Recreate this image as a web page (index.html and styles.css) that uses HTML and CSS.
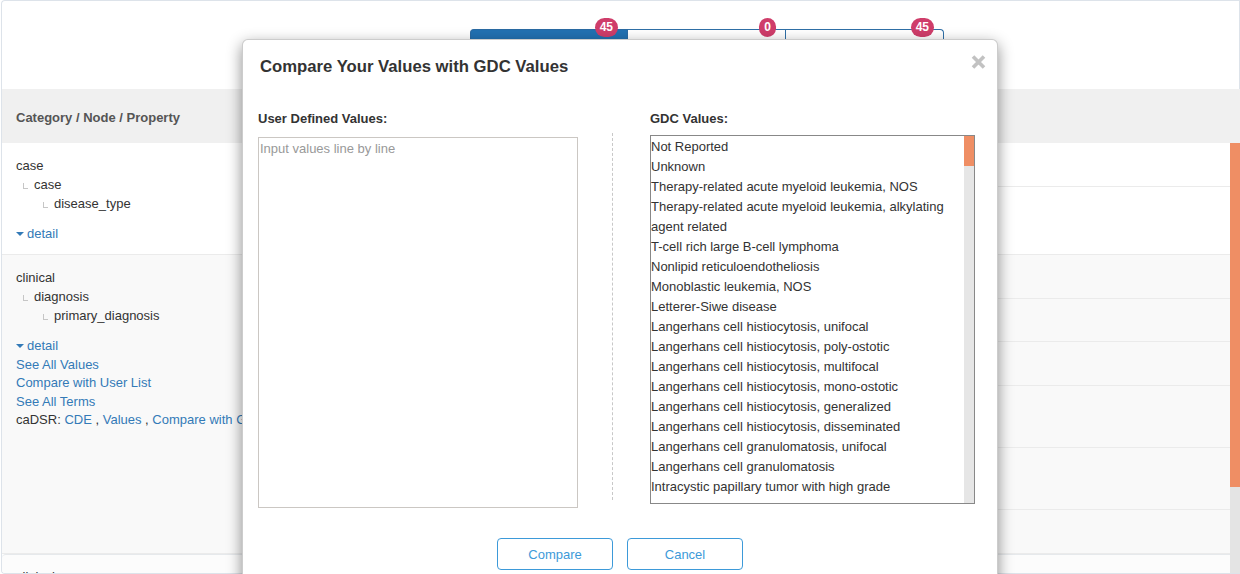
FILE: index.html
```html
<!DOCTYPE html>
<html>
<head>
<meta charset="utf-8">
<link rel="stylesheet" href="styles.css">
</head>
<body>
<div class="panel">
  <div class="topbar">
    <div class="tabs">
      <div class="tab active"><span class="badge">45</span></div>
      <div class="tab"><span class="badge">0</span></div>
      <div class="tab"><span class="badge">45</span></div>
    </div>
  </div>
  <div class="thead">Category / Node / Property</div>
  <div class="tbody">
    <div class="rows">
      <div class="row row-white">
        <div class="cell-prop">
          <div class="tree">case</div>
          <div class="tree lvl1"><span class="elbow"></span>case</div>
          <div class="tree lvl2"><span class="elbow"></span>disease_type</div>
          <div class="links">
            <a class="link"><span class="caret"></span>detail</a>
          </div>
        </div>
        <div class="cell-vals">
          <div class="sub h44"></div>
          <div class="sub h67 last"></div>
        </div>
      </div>
      <div class="row row-gray">
        <div class="cell-prop">
          <div class="tree">clinical</div>
          <div class="tree lvl1"><span class="elbow"></span>diagnosis</div>
          <div class="tree lvl2"><span class="elbow"></span>primary_diagnosis</div>
          <div class="links">
            <a class="link"><span class="caret"></span>detail</a>
            <a class="link">See All Values</a>
            <a class="link">Compare with User List</a>
            <a class="link">See All Terms</a>
            <div class="cadsr">caDSR: <a class="link-inline">CDE</a> , <a class="link-inline">Values</a> , <a class="link-inline">Compare with GDC</a></div>
          </div>
        </div>
        <div class="cell-vals">
          <div class="sub h44"></div>
          <div class="sub h43"></div>
          <div class="sub h44"></div>
          <div class="sub h62"></div>
          <div class="sub h62"></div>
          <div class="sub h43 last"></div>
        </div>
      </div>
      <div class="row row-light">
        <div class="cell-prop">
          <div class="tree">clinical</div>
        </div>
      </div>
    </div>
    <div class="vscroll"><div class="vthumb"></div></div>
  </div>
</div>

<div class="modal">
  <div class="modal-header">
    <h4 class="modal-title">Compare Your Values with GDC Values</h4>
    <span class="close"><svg width="15" height="14" viewBox="0 0 15 14"><path d="M2 1.5 L13 12.5 M13 1.5 L2 12.5" stroke="#c2c2c2" stroke-width="3.6" fill="none"/></svg></span>
  </div>
  <div class="modal-body">
    <div class="cols">
      <div class="col-left">
        <div class="label label-left">User Defined Values:</div>
        <textarea class="user-input" placeholder="Input values line by line"></textarea>
      </div>
      <div class="divider"></div>
      <div class="col-right">
        <div class="label label-right">GDC Values:</div>
        <div class="listbox">
          <div class="list">
            <div class="item">Not Reported</div>
            <div class="item">Unknown</div>
            <div class="item">Therapy-related acute myeloid leukemia, NOS</div>
            <div class="item">Therapy-related acute myeloid leukemia, alkylating agent related</div>
            <div class="item">T-cell rich large B-cell lymphoma</div>
            <div class="item">Nonlipid reticuloendotheliosis</div>
            <div class="item">Monoblastic leukemia, NOS</div>
            <div class="item">Letterer-Siwe disease</div>
            <div class="item">Langerhans cell histiocytosis, unifocal</div>
            <div class="item">Langerhans cell histiocytosis, poly-ostotic</div>
            <div class="item">Langerhans cell histiocytosis, multifocal</div>
            <div class="item">Langerhans cell histiocytosis, mono-ostotic</div>
            <div class="item">Langerhans cell histiocytosis, generalized</div>
            <div class="item">Langerhans cell histiocytosis, disseminated</div>
            <div class="item">Langerhans cell granulomatosis, unifocal</div>
            <div class="item">Langerhans cell granulomatosis</div>
            <div class="item">Intracystic papillary tumor with high grade</div>
          </div>
          <div class="lscroll"><div class="lthumb"></div></div>
        </div>
      </div>
    </div>
    <div class="actions">
      <button class="btn">Compare</button>
      <button class="btn">Cancel</button>
    </div>
  </div>
</div>
</body>
</html>
```

FILE: styles.css
```css
html, body {
  margin: 0;
  padding: 0;
  background: #fff;
  font-family: "Liberation Sans", Arial, sans-serif;
  font-size: 13px;
  color: #333;
  overflow: hidden;
  height: 574px;
}

.panel {
  margin-left: 1px;
  width: 1239px;
  height: 574px;
  box-sizing: border-box;
  border: 1px solid #dde3ea;
  border-right: none;
  border-radius: 4px 0 0 4px;
  overflow: hidden;
  display: flex;
  flex-direction: column;
}

.topbar {
  height: 88px;
  flex: none;
  box-sizing: border-box;
  padding-top: 28px;
  padding-left: 468px;
  border-right: 1px solid #dde3ea;
}

.tabs {
  display: flex;
}

.tab {
  position: relative;
  width: 158px;
  height: 36px;
  box-sizing: border-box;
  border: 1px solid #2f6fa7;
  border-bottom: none;
  background: #fff;
}

.tab + .tab {
  border-left: none;
}

.tab.active {
  background: #2271b2;
  border-color: #2a6aa3;
  border-radius: 4px 0 0 0;
}

.tab:last-child {
  width: 158px;
  border-radius: 0 4px 0 0;
}

.badge {
  position: absolute;
  top: -12px;
  right: 9px;
  height: 19px;
  min-width: 17px;
  box-sizing: border-box;
  padding: 0 5px;
  border-radius: 10px;
  background: #cf3d6a;
  color: #fff;
  font-weight: bold;
  font-size: 12px;
  line-height: 19px;
  text-align: center;
}

.thead {
  height: 54px;
  flex: none;
  background: #f0f0f0;
  display: flex;
  align-items: center;
  padding-left: 14px;
  font-weight: bold;
  color: #555;
  padding-top: 2px;
  box-sizing: border-box;
}

.tbody {
  flex: 1;
  display: flex;
  min-height: 0;
}

.rows {
  flex: 1;
  min-width: 0;
}

.row {
  display: flex;
  border-bottom: 1px solid #ebebeb;
}

.row-white { background: #fff; }
.row-gray { background: #f9f9f9; }
.row-light { background: #fcfcfc; border-top: 1px solid #e6e9ec; border-radius: 4px 0 0 0; height: 60px; }

.cell-prop {
  width: 300px;
  flex: none;
  box-sizing: border-box;
  padding: 13px 14px 0;
}

.row-light .cell-prop {
  padding-top: 12px;
}

.cell-vals {
  flex: 1;
  display: flex;
  flex-direction: column;
}

.sub {
  box-sizing: border-box;
  border-bottom: 1px solid #ebebeb;
}

.sub.last { border-bottom: none; }

.h43 { height: 43px; }
.h44 { height: 44px; }
.h62 { height: 62px; }
.h67 { height: 67px; }

.tree {
  line-height: 19px;
  white-space: nowrap;
}

.lvl1 { padding-left: 7px; }
.lvl2 { padding-left: 27px; }

.elbow {
  display: inline-block;
  width: 5px;
  height: 6px;
  box-sizing: border-box;
  border-left: 1px solid #c6c6c6;
  border-bottom: 1px solid #c6c6c6;
  margin-right: 6px;
  vertical-align: baseline;
}

.links {
  margin-top: 12px;
}

.link {
  display: block;
  color: #337ab7;
  line-height: 18.6px;
  text-decoration: none;
  white-space: nowrap;
}

.link-inline {
  color: #337ab7;
  text-decoration: none;
}

.cadsr {
  line-height: 18.6px;
  white-space: nowrap;
}

.caret {
  display: inline-block;
  width: 0;
  height: 0;
  border-top: 4px solid #337ab7;
  border-left: 4px solid transparent;
  border-right: 4px solid transparent;
  margin-right: 3px;
  vertical-align: 2px;
}

.vscroll {
  width: 10px;
  flex: none;
  background: #e4e4e4;
}

.vthumb {
  height: 344px;
  background: #ef8e64;
}

/* modal */
.modal {
  position: absolute;
  left: 242px;
  top: 39px;
  width: 756px;
  height: 560px;
  box-sizing: border-box;
  background: #fff;
  border: 1px solid rgba(0, 0, 0, 0.2);
  border-radius: 6px;
  box-shadow: 0 5px 15px rgba(0, 0, 0, 0.45);
}

.modal-header {
  position: relative;
  padding: 17px 17px 0;
}

.modal-title {
  margin: 0;
  font-size: 16.7px;
  line-height: 20px;
  font-weight: bold;
  color: #333;
}

.close {
  position: absolute;
  top: 15px;
  right: 11px;
  width: 15px;
  height: 14px;
  display: block;
}

.close svg { display: block; }

.modal-body {
  padding: 33px 15px 0;
}

.cols {
  display: flex;
  align-items: flex-start;
}

.col-left {
  width: 320px;
  flex: none;
}

.label {
  font-weight: bold;
  line-height: 18px;
  color: #333;
}

.label-left { margin-bottom: 9px; }
.label-right { margin-bottom: 7px; }

.user-input {
  display: block;
  width: 320px;
  height: 371px;
  box-sizing: border-box;
  margin: 0;
  border: 1px solid #cbc7c3;
  padding: 2px 1px;
  resize: none;
  font-family: "Liberation Sans", Arial, sans-serif;
  font-size: 13px;
  line-height: 18px;
  color: #333;
  background: #fff;
  outline: none;
}

.user-input::placeholder {
  color: #999;
}

.divider {
  width: 0;
  height: 367px;
  margin-top: 23px;
  margin-left: 34px;
  border-left: 1px dashed #c8c8c8;
}

.col-right {
  margin-left: 37px;
  width: 325px;
  flex: none;
}

.listbox {
  width: 325px;
  height: 369px;
  box-sizing: border-box;
  border: 1px solid #888;
  display: flex;
  overflow: hidden;
}

.list {
  flex: 1;
  min-width: 0;
  overflow: hidden;
  padding-top: 1px;
}

.item {
  line-height: 20px;
  color: #333;
}

.lscroll {
  width: 10px;
  flex: none;
  background: #e6e6e6;
}

.lthumb {
  height: 30px;
  background: #ef8e64;
}

.actions {
  display: flex;
  justify-content: center;
  gap: 14px;
  margin-top: 30px;
}

.btn {
  width: 116px;
  height: 32px;
  box-sizing: border-box;
  border: 1px solid #3d9ad9;
  border-radius: 4px;
  background: #fff;
  color: #3d9ad9;
  font-family: "Liberation Sans", Arial, sans-serif;
  font-size: 13px;
  padding: 0;
}
```
